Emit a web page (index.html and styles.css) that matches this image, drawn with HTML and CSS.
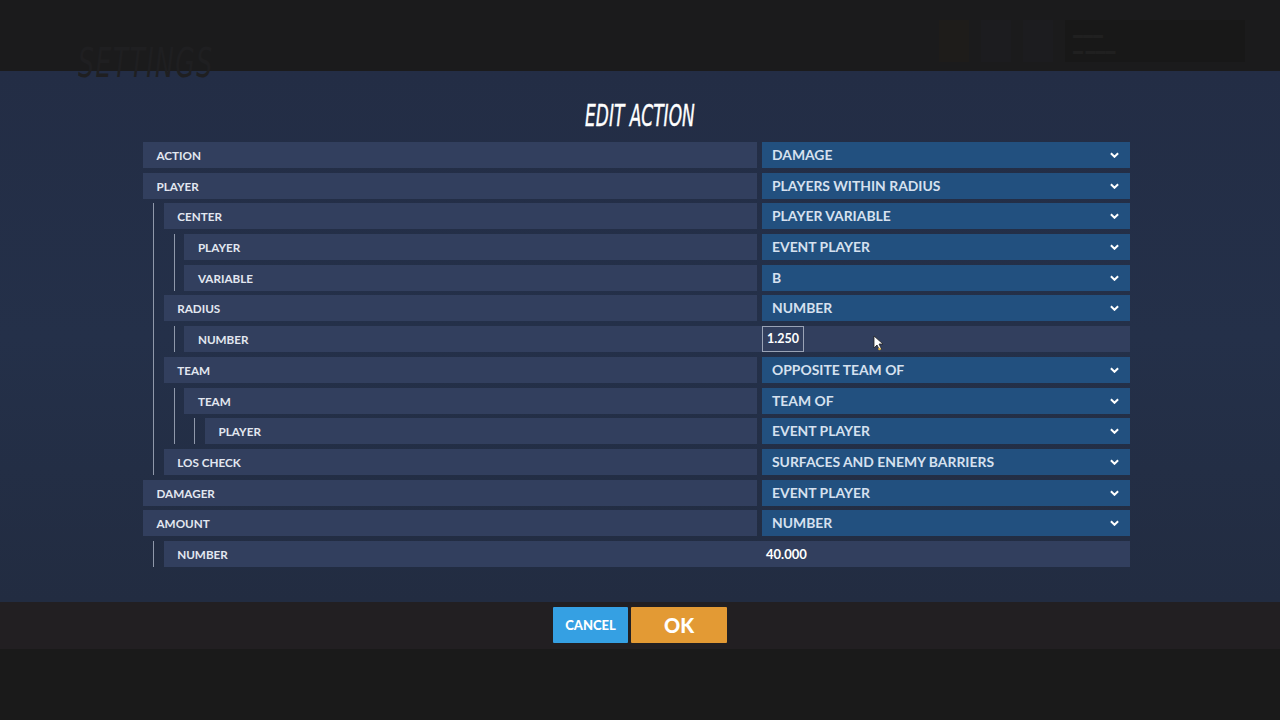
FILE: index.html
```html
<!DOCTYPE html>
<html>
<head>
<meta charset="utf-8">
<link rel="stylesheet" href="styles.css">
</head>
<body>
<div class="page">
  <div class="topbar">
    <div class="ghost-title">SETTINGS</div>
    <div class="ghost-right">
      <div class="ghost-sq orange"></div>
      <div class="ghost-sq"></div>
      <div class="ghost-sq"></div>
      <div class="ghost-box"><span>▬▬▬</span><span>▬ ▬▬▬</span></div>
    </div>
  </div>
  <div class="panel">
    <div class="title"><span>EDIT ACTION</span></div>
    <div class="tree">
      <div class="row"><div class="label">ACTION</div><div class="select">DAMAGE<svg class="chev" viewBox="0 0 10 6"><path d="M1 1L5 5L9 1"/></svg></div></div>
      <div class="row"><div class="label">PLAYER</div><div class="select">PLAYERS WITHIN RADIUS<svg class="chev" viewBox="0 0 10 6"><path d="M1 1L5 5L9 1"/></svg></div></div>
      <div class="kids">
        <div class="row"><div class="label">CENTER</div><div class="select">PLAYER VARIABLE<svg class="chev" viewBox="0 0 10 6"><path d="M1 1L5 5L9 1"/></svg></div></div>
        <div class="kids">
          <div class="row"><div class="label">PLAYER</div><div class="select">EVENT PLAYER<svg class="chev" viewBox="0 0 10 6"><path d="M1 1L5 5L9 1"/></svg></div></div>
          <div class="row"><div class="label">VARIABLE</div><div class="select">B<svg class="chev" viewBox="0 0 10 6"><path d="M1 1L5 5L9 1"/></svg></div></div>
        </div>
        <div class="row"><div class="label">RADIUS</div><div class="select">NUMBER<svg class="chev" viewBox="0 0 10 6"><path d="M1 1L5 5L9 1"/></svg></div></div>
        <div class="kids">
          <div class="row numrow"><div class="label">NUMBER</div><div class="value"><span class="numbox">1.250</span></div></div>
        </div>
        <div class="row"><div class="label">TEAM</div><div class="select">OPPOSITE TEAM OF<svg class="chev" viewBox="0 0 10 6"><path d="M1 1L5 5L9 1"/></svg></div></div>
        <div class="kids">
          <div class="row"><div class="label">TEAM</div><div class="select">TEAM OF<svg class="chev" viewBox="0 0 10 6"><path d="M1 1L5 5L9 1"/></svg></div></div>
          <div class="kids">
            <div class="row"><div class="label">PLAYER</div><div class="select">EVENT PLAYER<svg class="chev" viewBox="0 0 10 6"><path d="M1 1L5 5L9 1"/></svg></div></div>
          </div>
        </div>
        <div class="row"><div class="label">LOS CHECK</div><div class="select">SURFACES AND ENEMY BARRIERS<svg class="chev" viewBox="0 0 10 6"><path d="M1 1L5 5L9 1"/></svg></div></div>
      </div>
      <div class="row"><div class="label">DAMAGER</div><div class="select">EVENT PLAYER<svg class="chev" viewBox="0 0 10 6"><path d="M1 1L5 5L9 1"/></svg></div></div>
      <div class="row"><div class="label">AMOUNT</div><div class="select">NUMBER<svg class="chev" viewBox="0 0 10 6"><path d="M1 1L5 5L9 1"/></svg></div></div>
      <div class="kids">
        <div class="row numrow"><div class="label">NUMBER</div><div class="value"><span class="numtext">40.000</span></div></div>
      </div>
    </div>
  </div>
  <div class="buttonbar">
    <button class="btn cancel">CANCEL</button>
    <button class="btn ok">OK</button>
  </div>
  <div class="bottom"></div>
  <svg class="cursor" viewBox="0 0 12 16"><path d="M1 1L1 13L4 10L6.5 15L8.5 14L6 9L10 9Z" fill="#fff" stroke="#222" stroke-width="0.8"/><circle cx="6.5" cy="14" r="1.3" fill="#e0b040"/></svg>
</div>
</body>
</html>
```
FILE: styles.css
```css
* { box-sizing: border-box; }
html, body { margin: 0; padding: 0; }
body { background: #1a1a1a; font-family: Lato, "Open Sans", sans-serif; }
.page { position: relative; width: 1280px; height: 720px; overflow: hidden; display: flex; flex-direction: column; }

.topbar { height: 71px; background: #1b1b1c; display: flex; align-items: flex-start; justify-content: space-between; padding: 0 35px 0 78px; }
.ghost-title { margin-top: 40px; font-family: "DejaVu Sans Condensed", "DejaVu Sans", sans-serif; font-style: italic; font-size: 40px; color: #1f1f21; transform: scaleX(0.7); transform-origin: left; letter-spacing: 2px; }
.ghost-right { display: flex; gap: 12px; margin-top: 20px; align-items: stretch; height: 42px; }
.ghost-sq { width: 30px; background: #1c1c1f; }
.ghost-sq.orange { background: #1e1c1a; }
.ghost-box { width: 180px; background: #181818; display: flex; flex-direction: column; padding: 8px; color: #202020; font-size: 10px; gap: 4px; }

.panel { height: 531px; background: linear-gradient(#232d45, #243049 50%, #222c41); display: flex; flex-direction: column; }
.title { height: 71px; display: flex; justify-content: center; align-items: center; padding-top: 18px; }
.title span { display: inline-block; color: #fff; font-family: "DejaVu Sans Condensed", "DejaVu Sans", sans-serif; font-style: italic; font-size: 31px; line-height: 31px; transform: scaleX(0.61); -webkit-text-stroke: 0.4px #fff; }

.tree { margin-left: 143px; width: 987px; display: flex; flex-direction: column; gap: 4.7px; }
.kids { display: flex; flex-direction: column; gap: 4.7px; margin-left: 10px; padding-left: 9.7px; border-left: 1px solid #8f98aa; }

.row { height: 26px; display: flex; gap: 5px; }
.label { flex: 1; background: #323f5e; color: #e2e7f0; font-size: 11.7px; font-weight: 700; line-height: 26px; padding-left: 13.5px; }
.select { width: 368px; background: #22507f; color: #d6e1ef; font-size: 13.9px; font-weight: 700; line-height: 26px; padding: 0 11px 0 10px; display: flex; align-items: center; justify-content: space-between; }
.chev { width: 9px; height: 6px; fill: none; stroke: #fff; stroke-width: 2.2; }

.numrow { gap: 0; background: #323f5e; width: 100%; }
.numrow .label { background: transparent; }
.numrow .value { width: 368px; display: flex; align-items: stretch; }
.numbox { border: 1px solid #9aa3b6; color: #fff; font-size: 12.5px; font-weight: 700; line-height: 24px; padding: 0 4px; }
.numtext { color: #fff; font-size: 13px; font-weight: 700; line-height: 26px; padding-left: 4px; }

.buttonbar { height: 47px; background: #221f22; display: flex; justify-content: center; align-items: flex-start; gap: 3px; padding-top: 5px; }
.btn { border: none; height: 36px; color: #fff; font-family: Lato, "Open Sans", sans-serif; font-weight: 900; border-radius: 1px; padding: 0; cursor: pointer; }
.cancel { width: 75px; background: #35a0e3; font-size: 13px; }
.ok { width: 96px; background: #e39a34; font-size: 20px; }
.bottom { flex: 1; background: #1a1a1a; }

.cursor { position: absolute; left: 873px; top: 335px; width: 12px; height: 16px; }
```
